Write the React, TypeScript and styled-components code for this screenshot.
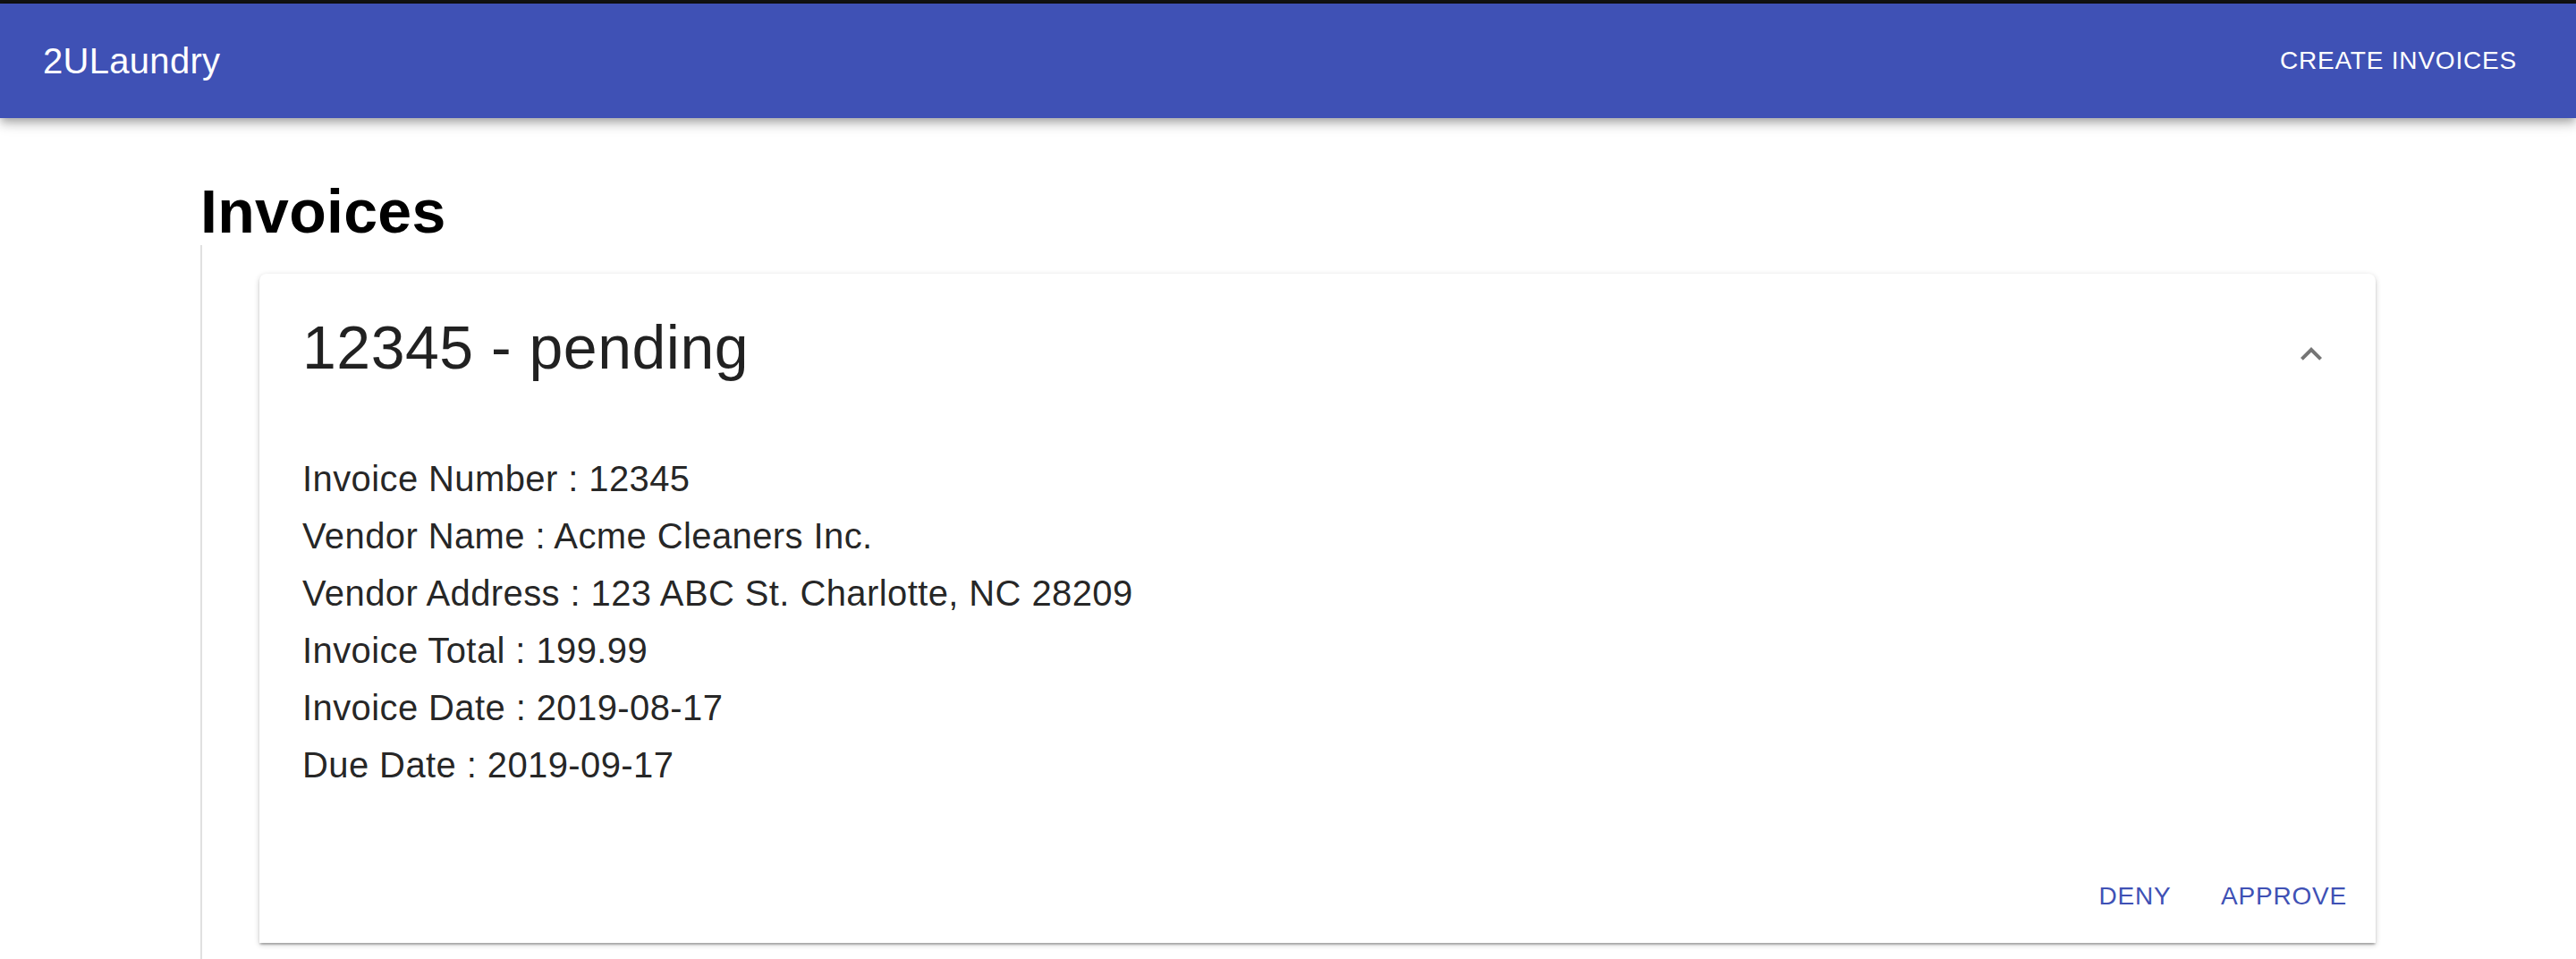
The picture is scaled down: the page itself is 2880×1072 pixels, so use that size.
import React from "react";
import styled, { createGlobalStyle } from "styled-components";

const GlobalStyle = createGlobalStyle`
  html, body {
    margin: 0;
    padding: 0;
    background: #ffffff;
    font-family: "Liberation Sans", Arial, Helvetica, sans-serif;
  }
  * { box-sizing: border-box; }
`;

const Page = styled.div`
  display: flex;
  flex-direction: column;
  min-height: 100vh;
`;

const TopStrip = styled.div`
  height: 4px;
  background: #121212;
`;

const AppBar = styled.header`
  position: relative;
  z-index: 2;
  height: 128px;
  display: flex;
  align-items: center;
  justify-content: space-between;
  padding: 0 50px 0 48px;
  background: #3f51b5;
  color: #ffffff;
  box-shadow: 0px 4px 8px -2px rgba(0, 0, 0, 0.2),
    0px 8px 10px 0px rgba(0, 0, 0, 0.14), 0px 2px 20px 0px rgba(0, 0, 0, 0.12);
`;

const Brand = styled.h6`
  margin: 0;
  font-size: 40px;
  font-weight: 400;
  line-height: 64px;
  letter-spacing: 0.3px;
`;

const NavButton = styled.button`
  height: 72px;
  padding: 0 16px;
  border: none;
  background: transparent;
  color: #ffffff;
  font-family: inherit;
  font-size: 28px;
  letter-spacing: 0.8px;
  text-transform: uppercase;
  cursor: pointer;
`;

const Main = styled.main`
  flex: 1;
  display: flex;
  flex-direction: column;
  padding: 0 224px;
`;

const PageTitle = styled.h1`
  margin: 66px 0 0;
  font-size: 68px;
  line-height: 76px;
  font-weight: 700;
  letter-spacing: 0.3px;
  color: #000000;
`;

const InvoiceList = styled.section`
  flex: 1;
  border-left: 2px solid #e0e0e0;
  padding: 32px 0 0 64px;
`;

const Panel = styled.article`
  background: #ffffff;
  border-radius: 8px 8px 0 0;
  box-shadow: 0px 2px 6px 0px rgba(0, 0, 0, 0.2),
    0px 2px 2px 0px rgba(0, 0, 0, 0.14), 0px 4px 2px -2px rgba(0, 0, 0, 0.12);
`;

const Summary = styled.div`
  display: flex;
  align-items: flex-start;
  justify-content: space-between;
  padding: 40px 48px 0 48px;
`;

const SummaryTitle = styled.h4`
  margin: 0;
  font-size: 68px;
  line-height: 84px;
  font-weight: 400;
  letter-spacing: 0.5px;
  color: rgba(0, 0, 0, 0.87);
`;

const ExpandIcon = styled.svg`
  width: 48px;
  height: 48px;
  margin-top: 26px;
  fill: rgba(0, 0, 0, 0.54);
  flex-shrink: 0;
`;

const Details = styled.div`
  display: flex;
  flex-direction: column;
  padding: 73px 48px 0 48px;
`;

const DetailLine = styled.p`
  margin: 0;
  font-size: 40px;
  line-height: 64px;
  letter-spacing: 0.4px;
  color: rgba(0, 0, 0, 0.87);
`;

const Actions = styled.div`
  display: flex;
  justify-content: flex-end;
  gap: 16px;
  padding: 79px 16px 16px;
`;

const ActionButton = styled.button`
  min-width: 128px;
  height: 72px;
  padding: 0 16px;
  border: none;
  border-radius: 8px;
  background: transparent;
  color: #3f51b5;
  font-family: inherit;
  font-size: 28px;
  letter-spacing: 0.8px;
  text-transform: uppercase;
  cursor: pointer;
`;

const invoice = {
  number: "12345",
  status: "pending",
  vendorName: "Acme Cleaners Inc.",
  vendorAddress: "123 ABC St. Charlotte, NC 28209",
  total: "199.99",
  invoiceDate: "2019-08-17",
  dueDate: "2019-09-17",
};

export default function App() {
  const rows: [string, string][] = [
    ["Invoice Number", invoice.number],
    ["Vendor Name", invoice.vendorName],
    ["Vendor Address", invoice.vendorAddress],
    ["Invoice Total", invoice.total],
    ["Invoice Date", invoice.invoiceDate],
    ["Due Date", invoice.dueDate],
  ];
  return (
    <>
      <GlobalStyle />
      <Page>
        <TopStrip />
        <AppBar>
          <Brand>2ULaundry</Brand>
          <NavButton>Create Invoices</NavButton>
        </AppBar>
        <Main>
          <PageTitle>Invoices</PageTitle>
          <InvoiceList>
            <Panel>
              <Summary>
                <SummaryTitle>
                  {invoice.number} - {invoice.status}
                </SummaryTitle>
                <ExpandIcon viewBox="0 0 24 24" aria-hidden="true">
                  <path d="M7.41 15.41L12 10.83l4.59 4.58L18 14l-6-6-6 6z" />
                </ExpandIcon>
              </Summary>
              <Details>
                {rows.map(([label, value]) => (
                  <DetailLine key={label}>
                    {label} : {value}
                  </DetailLine>
                ))}
              </Details>
              <Actions>
                <ActionButton>Deny</ActionButton>
                <ActionButton>Approve</ActionButton>
              </Actions>
            </Panel>
          </InvoiceList>
        </Main>
      </Page>
    </>
  );
}
